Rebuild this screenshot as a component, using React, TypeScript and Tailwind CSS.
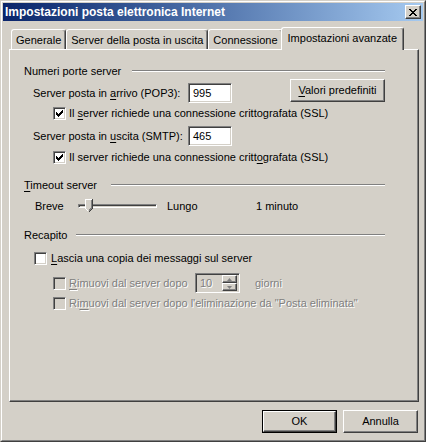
import React from 'react';

const raised =
  'border border-t-white border-l-white border-r-[#404040] border-b-[#404040] shadow-[inset_-1px_-1px_0_#808080]';
const sunken =
  'border border-t-[#808080] border-l-[#808080] border-r-white border-b-white shadow-[inset_1px_1px_0_#404040,inset_-1px_-1px_0_#d4d0c8]';
const disabledText = 'text-[#808080] [text-shadow:1px_1px_0_#ffffff]';

function U({ children }: { children: React.ReactNode }) {
  return <span className="underline underline-offset-[2px]">{children}</span>;
}

function Check({ checked, disabled }: { checked?: boolean; disabled?: boolean }) {
  return (
    <div className={`w-[13px] h-[13px] shrink-0 ${sunken} ${disabled ? 'bg-[#d4d0c8]' : 'bg-white'}`}>
      {checked && (
        <svg width="11" height="11" viewBox="0 0 11 11" shapeRendering="crispEdges">
          <path
            d="M8 2h1v3h-1zM7 3h1v3h-1zM6 4h1v3h-1zM5 5h1v3h-1zM4 6h1v3h-1zM3 5h1v3h-1zM2 4h1v3h-1z"
            fill="#000"
          />
        </svg>
      )}
    </div>
  );
}

function GroupHeader({ label, labelWidth }: { label: React.ReactNode; labelWidth: string }) {
  return (
    <div className="flex items-center h-[14px]">
      <span className={`${labelWidth} shrink-0 whitespace-nowrap`}>{label}</span>
      <div className="flex-1 h-[2px] border-t border-t-[#808080] border-b border-b-white" />
    </div>
  );
}

function Tab({ label, active }: { label: string; active?: boolean }) {
  if (active) {
    return (
      <div className="relative z-10 -mb-px -mx-[2px] h-[23px] px-[6px] pb-[2px] flex items-center whitespace-nowrap bg-[#d4d0c8] border-t border-l border-r border-t-white border-l-white border-r-[#404040] shadow-[inset_-1px_0_0_#808080] rounded-t-[3px]">
        {label}
      </div>
    );
  }
  return (
    <div className="h-[20px] px-[4px] pt-px flex items-center whitespace-nowrap border-t border-l border-r border-t-white border-l-white border-r-[#404040] shadow-[inset_-1px_0_0_#808080] rounded-t-[3px]">
      {label}
    </div>
  );
}

function Button({ children, isDefault }: { children: React.ReactNode; isDefault?: boolean }) {
  if (isDefault) {
    return (
      <div className="w-[75px] h-[23px] border border-black">
        <div className={`w-full h-full flex items-center justify-center ${raised}`}>{children}</div>
      </div>
    );
  }
  return <div className={`w-[75px] h-[23px] flex items-center justify-center ${raised}`}>{children}</div>;
}

export default function App() {
  return (
    <div className="w-[426px] h-[442px] bg-[#d4d0c8] border border-t-[#d4d0c8] border-l-[#d4d0c8] border-r-[#404040] border-b-[#404040] font-['Liberation_Sans',Arial,sans-serif] text-[11px] text-black leading-none select-none">
      <div className="h-full border border-t-white border-l-white border-r-[#808080] border-b-[#808080] p-px flex flex-col">
        {/* Title bar */}
        <div className="h-[18px] bg-linear-to-r from-[#0a246a] to-[#a6caf0] flex items-center pl-[2px] pr-[2px]">
          <span className="text-white font-bold text-[12px] flex-1">Impostazioni posta elettronica Internet</span>
          <div className={`w-[16px] h-[14px] bg-[#d4d0c8] flex items-center justify-center ${raised}`}>
            <svg width="8" height="7" viewBox="0 0 8 7" shapeRendering="crispEdges">
              <path
                d="M0 0h2v1h-2zM6 0h2v1h-2zM1 1h2v1h-2zM5 1h2v1h-2zM2 2h4v1h-4zM3 3h2v1h-2zM2 4h4v1h-4zM1 5h2v1h-2zM5 5h2v1h-2zM0 6h2v1h-2zM6 6h2v1h-2z"
                fill="#000"
              />
            </svg>
          </div>
        </div>

        {/* Tabs */}
        <div className="ml-[6px] mt-[6px] w-[410px] flex items-end pl-[2px] h-[22px]">
          <Tab label="Generale" />
          <Tab label="Server della posta in uscita" />
          <Tab label="Connessione" />
          <Tab label="Impostazioni avanzate" active />
        </div>

        {/* Panel */}
        <div className={`ml-[6px] w-[410px] h-[353px] ${raised}`}>
          <div className="ml-[14px] w-[361px] flex flex-col">
            <div className="mt-[14px]">
              <GroupHeader label="Numeri porte server" labelWidth="w-[108px]" />
            </div>

            {/* POP3 */}
            <div className="mt-px flex h-[24px]">
              <div className="flex items-center mt-[4px] h-[20px]">
                <span className="w-[164px] pl-[9px] whitespace-nowrap">
                  Server posta in <U>a</U>rrivo (POP3):
                </span>
                <div className={`w-[44px] h-[20px] bg-white flex items-center pl-[4px] ${sunken}`}>995</div>
              </div>
              <div className="ml-auto">
                <div className={`w-[95px] h-[23px] flex items-center justify-center ${raised}`}>
                  <span>
                    <U>V</U>alori predefiniti
                  </span>
                </div>
              </div>
            </div>

            <div className="mt-[4px] ml-[29px] flex items-center h-[13px]">
              <Check checked />
              <span className="ml-[3px] whitespace-nowrap">
                Il <U>s</U>erver richiede una connessione crittografata (SSL)
              </span>
            </div>

            {/* SMTP */}
            <div className="mt-[6px] flex items-center h-[20px]">
              <span className="w-[164px] pl-[9px] whitespace-nowrap">
                Server posta in <U>u</U>scita (SMTP):
              </span>
              <div className={`w-[44px] h-[20px] bg-white flex items-center pl-[4px] ${sunken}`}>465</div>
            </div>

            <div className="mt-[5px] ml-[29px] flex items-center h-[13px]">
              <Check checked />
              <span className="ml-[3px] whitespace-nowrap">
                Il server richiede una connessione critt<U>o</U>grafata (SSL)
              </span>
            </div>

            {/* Timeout */}
            <div className="mt-[14px]">
              <GroupHeader
                label={
                  <>
                    <U>T</U>imeout server
                  </>
                }
                labelWidth="w-[87px]"
              />
            </div>

            <div className="mt-[6px] flex items-center h-[16px]">
              <span className="ml-[11px] w-[43px]">Breve</span>
              <div className="relative w-[79px] h-[16px] flex items-center">
                <div className={`w-full h-[4px] bg-[#d4d0c8] ${sunken}`} />
                <svg
                  className="absolute left-[7px] top-[1px]"
                  width="8"
                  height="14"
                  viewBox="0 0 8 14"
                  shapeRendering="crispEdges"
                >
                  <path d="M0 0H8V9L4 13L0 9Z" fill="#d4d0c8" />
                  <path d="M0.5 9V0.5H7" stroke="#fff" fill="none" />
                  <path d="M7.5 0V9.5L4 13" stroke="#404040" fill="none" />
                  <path d="M6.5 1V9L4 11.5" stroke="#808080" fill="none" />
                  <path d="M0.5 9.5L3.5 12.5" stroke="#fff" fill="none" />
                </svg>
              </div>
              <span className="ml-[10px] w-[89px]">Lungo</span>
              <span>1 minuto</span>
            </div>

            {/* Recapito */}
            <div className="mt-[14px]">
              <GroupHeader label="Recapito" labelWidth="w-[52px]" />
            </div>

            <div className="mt-[10px] ml-[10px] flex items-center h-[13px]">
              <Check />
              <span className="ml-[4px] whitespace-nowrap">
                <U>L</U>ascia una copia dei messaggi sul server
              </span>
            </div>

            <div className="mt-[8px] ml-[29px] flex items-center h-[20px]">
              <Check disabled />
              <span className={`ml-[3px] w-[126px] whitespace-nowrap ${disabledText}`}>
                <U>R</U>imuovi dal server dopo
              </span>
              <div className={`w-[45px] h-[20px] bg-[#d4d0c8] flex items-center pl-[4px] pr-[2px] ${sunken}`}>
                <span className={`flex-1 ${disabledText}`}>10</span>
                <div className="flex flex-col w-[15px] h-[16px]">
                  <div className={`h-[8px] flex items-center justify-center ${raised}`}>
                    <svg width="5" height="3" viewBox="0 0 5 3">
                      <path d="M2.5 0L5 3H0Z" fill="#808080" />
                    </svg>
                  </div>
                  <div className={`h-[8px] flex items-center justify-center ${raised}`}>
                    <svg width="5" height="3" viewBox="0 0 5 3">
                      <path d="M0 0H5L2.5 3Z" fill="#808080" />
                    </svg>
                  </div>
                </div>
              </div>
              <span className={`ml-[15px] ${disabledText}`}>giorni</span>
            </div>

            <div className="mt-[4px] ml-[29px] flex items-center h-[13px]">
              <Check disabled />
              <span className={`ml-[3px] whitespace-nowrap ${disabledText}`}>
                Ri<U>m</U>uovi dal server dopo l'eliminazione da "Posta eliminata"
              </span>
            </div>
          </div>
        </div>

        {/* Buttons */}
        <div className="ml-[6px] w-[410px] mt-[8px] flex justify-end gap-[6px] pr-px">
          <Button isDefault>OK</Button>
          <Button>Annulla</Button>
        </div>
      </div>
    </div>
  );
}
